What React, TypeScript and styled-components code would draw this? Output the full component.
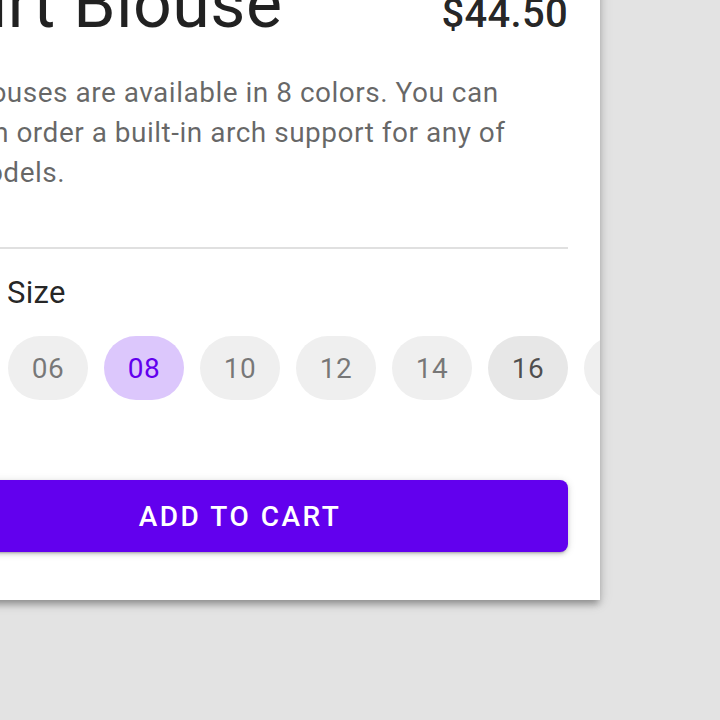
import React, { useState } from "react";
import styled, { createGlobalStyle } from "styled-components";

const GlobalStyle = createGlobalStyle`
  html, body {
    margin: 0;
    padding: 0;
    background: #e3e3e3;
    overflow: hidden;
  }
  body {
    font-family: Roboto, "Noto Sans", "Liberation Sans", sans-serif;
    -webkit-font-smoothing: antialiased;
  }
`;

const Stage = styled.div`
  width: 720px;
  height: 720px;
  overflow: hidden;
`;

const Card = styled.div`
  width: 720px;
  margin: -68px 0 0 -120px;
  padding: 32px 0 48px;
  box-sizing: border-box;
  background: #ffffff;
  overflow: hidden;
  box-shadow: 0 6px 6px -2px rgba(0, 0, 0, 0.2), 0 4px 8px 0 rgba(0, 0, 0, 0.14),
    0 2px 14px 0 rgba(0, 0, 0, 0.12);
`;

const Section = styled.div`
  padding: 0 32px;
`;

const Header = styled.div`
  display: flex;
  justify-content: space-between;
  align-items: baseline;
`;

const Title = styled.h1`
  margin: 0;
  font-size: 68px;
  line-height: 80px;
  font-weight: 400;
  letter-spacing: 0.5px;
  color: rgba(0, 0, 0, 0.87);
  white-space: nowrap;
`;

const Price = styled.span`
  font-size: 40px;
  line-height: 48px;
  font-weight: 500;
  letter-spacing: 0.3px;
  color: rgba(0, 0, 0, 0.87);
`;

const Description = styled.p`
  margin: 29px 0 0;
  padding-right: 24px;
  font-size: 28px;
  line-height: 40px;
  letter-spacing: 0.5px;
  color: rgba(0, 0, 0, 0.6);
`;

const Divider = styled.hr`
  margin: 54px 32px 0;
  border: none;
  height: 2px;
  background: #e0e0e0;
`;

const Label = styled.div`
  margin-top: 20px;
  font-size: 31px;
  line-height: 48px;
  letter-spacing: 0.3px;
  color: rgba(0, 0, 0, 0.87);
`;

const ChipRow = styled.div`
  display: flex;
  gap: 16px;
  margin-top: 19px;
`;

const Chip = styled.button<{ $selected?: boolean; $hover?: boolean }>`
  flex: 0 0 auto;
  width: 80px;
  height: 64px;
  border: none;
  border-radius: 32px;
  padding: 0;
  font-family: inherit;
  font-size: 28px;
  letter-spacing: 0.5px;
  cursor: pointer;
  background: ${(p) =>
    p.$selected ? "#dcc7fc" : p.$hover ? "#e7e7e7" : "#efefef"};
  color: ${(p) =>
    p.$selected ? "#6200ee" : p.$hover ? "rgba(0,0,0,0.66)" : "rgba(0,0,0,0.5)"};
`;

const CartButton = styled.button`
  display: block;
  width: 100%;
  height: 72px;
  margin-top: 80px;
  border: none;
  border-radius: 8px;
  background: #6200ee;
  color: #ffffff;
  font-family: inherit;
  font-size: 28px;
  font-weight: 500;
  letter-spacing: 2.5px;
  text-transform: uppercase;
  box-shadow: 0 3px 2px -2px rgba(0, 0, 0, 0.2), 0 2px 4px 0 rgba(0, 0, 0, 0.14),
    0 1px 8px 0 rgba(0, 0, 0, 0.12);
  cursor: pointer;
`;

const sizes = ["04", "06", "08", "10", "12", "14", "16", "18", "20"];

export default function App() {
  const [size, setSize] = useState("08");

  return (
    <Stage>
      <GlobalStyle />
      <Card>
        <Section>
          <Header>
            <Title>Shirt Blouse</Title>
            <Price>$44.50</Price>
          </Header>
          <Description>
            Our Blouses are available in 8 colors. You can custom order a
            built-in arch support for any of our models.
          </Description>
        </Section>
        <Divider />
        <Section>
          <Label>Select Size</Label>
          <ChipRow>
            {sizes.map((s) => (
              <Chip
                key={s}
                $selected={s === size}
                $hover={s === "16"}
                onClick={() => setSize(s)}
              >
                {s}
              </Chip>
            ))}
          </ChipRow>
          <CartButton>Add to cart</CartButton>
        </Section>
      </Card>
    </Stage>
  );
}
